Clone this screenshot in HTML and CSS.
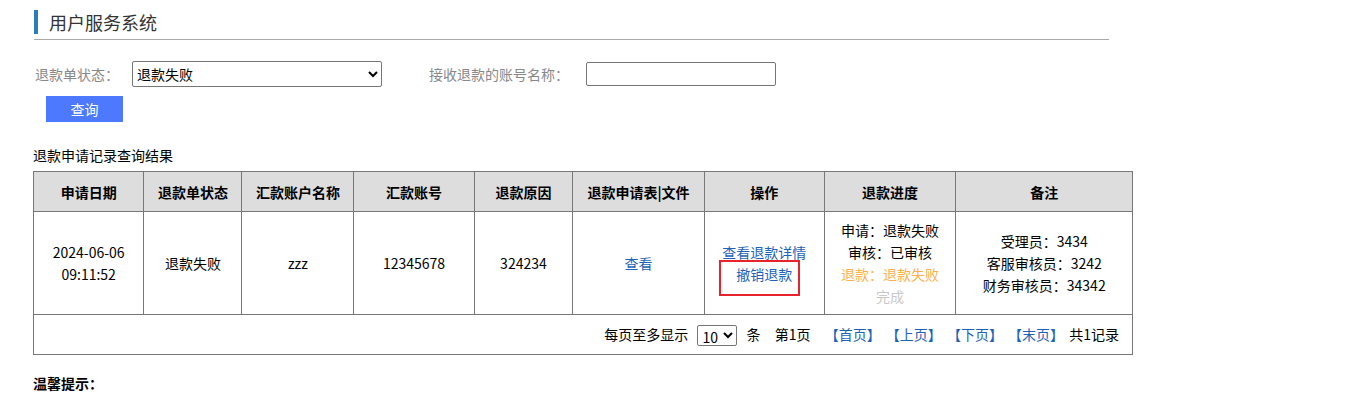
FILE: index.html
```html
<!DOCTYPE html>
<html lang="zh-CN">
  <head>
    <meta charset="UTF-8" />
    <title>用户服务系统</title>
    <link rel="stylesheet" href="styles.css">
  </head>
  <body>
    <div class="page">
      <div class="title-wrap">
        <h2 class="title">用户服务系统</h2>
      </div>

      <div class="search">
        <div class="search-row">
          <label class="label">退款单状态：</label>
          <select class="status-select">
            <option>退款失败</option>
            <option>全部</option>
          </select>
          <label class="label label-account">接收退款的账号名称：</label>
          <input class="account-input" type="text" />
        </div>
        <button class="btn-query">查询</button>
      </div>

      <div class="result-title">退款申请记录查询结果</div>

      <table class="result-table">
        <thead>
          <tr>
            <th class="c-date">申请日期</th>
            <th class="c-status">退款单状态</th>
            <th class="c-name">汇款账户名称</th>
            <th class="c-account">汇款账号</th>
            <th class="c-reason">退款原因</th>
            <th class="c-file">退款申请表|文件</th>
            <th class="c-op">操作</th>
            <th class="c-progress">退款进度</th>
            <th class="c-remark">备注</th>
          </tr>
        </thead>
        <tbody>
          <tr class="data-row">
            <td>2024-06-06<br />09:11:52</td>
            <td>退款失败</td>
            <td>zzz</td>
            <td>12345678</td>
            <td>324234</td>
            <td><a href="#" class="link">查看</a></td>
            <td>
              <a href="#" class="link">查看退款详情</a><br />
              <a href="#" class="link cancel">撤销退款</a>
            </td>
            <td>
              申请：退款失败<br />
              审核：已审核<br />
              <span class="step-fail">退款：退款失败</span><br />
              <span class="step-todo">完成</span>
            </td>
            <td>
              受理员：3434<br />
              客服审核员：3242<br />
              财务审核员：34342
            </td>
          </tr>
          <tr>
            <td colspan="9" class="pager">
              每页至多显示
              <select class="size-select">
                <option>10</option>
                <option>20</option>
              </select>
              <span class="gap">条</span>
              <span class="gap">第1页</span>
              <a href="#" class="link page-link">【首页】</a>
              <a href="#" class="link page-link">【上页】</a>
              <a href="#" class="link page-link">【下页】</a>
              <a href="#" class="link page-link">【末页】</a>
              共1记录
            </td>
          </tr>
        </tbody>
      </table>

      <div class="tips">温馨提示：</div>
    </div>
  </body>
</html>
```

FILE: styles.css
```css
body {
  margin: 0;
  padding: 0;
  font-family: "Noto Sans CJK SC", "Liberation Sans", sans-serif;
  font-size: 14px;
  color: #000;
  background: #fff;
}

.page {
  padding-left: 33px;
  width: 1100px;
}

.title-wrap {
  margin-left: 1px;
  width: 1075px;
  padding-top: 10px;
  padding-bottom: 5px;
  border-bottom: 1px solid #a9a9a9;
}

.title {
  margin: 0;
  padding-left: 11px;
  border-left: 4px solid #2b7bbd;
  font-size: 18px;
  font-weight: normal;
  line-height: 24px;
  color: #333;
}

.search {
  padding-top: 21px;
}

.search-row {
  display: flex;
  align-items: center;
  height: 26px;
}

.label {
  margin-left: 2px;
  margin-right: 13px;
  color: #888;
  line-height: 20px;
}

.label-account {
  margin-left: 47px;
  margin-right: 17px;
}

.status-select {
  width: 250px;
  height: 26px;
  font-family: inherit;
  font-size: 14px;
  color: #000;
  border: 1px solid #767676;
  border-radius: 2px;
  background: #fff;
}

.account-input {
  width: 184px;
  height: 22px;
  padding: 0 2px;
  border: 1px solid #767676;
  border-radius: 2px;
}

.btn-query {
  display: block;
  margin: 9px 0 0 13px;
  width: 77px;
  height: 26px;
  border: none;
  background-color: #4d79ff;
  color: #fff;
  font-family: inherit;
  font-size: 14px;
  line-height: 26px;
  padding: 0;
  cursor: pointer;
}

.result-title {
  margin-top: 22px;
  line-height: 22px;
  font-size: 14px;
}

.result-table {
  margin-top: 5px;
  width: 1100px;
  border-collapse: collapse;
  font-size: 14px;
}

.result-table th,
.result-table td {
  border: 1px solid #777;
  text-align: center;
  padding: 0;
  line-height: 22px;
}

.result-table th {
  height: 39px;
  background-color: #dddddd;
  font-weight: bold;
}

.c-date { width: 110px; }
.c-status { width: 98px; }
.c-name { width: 112px; }
.c-account { width: 120px; }
.c-reason { width: 98px; }
.c-file { width: 132px; }
.c-op { width: 120px; }
.c-progress { width: 132px; }
.c-remark { width: 177px; }

.data-row td {
  height: 102px;
}

.link {
  color: #1e62b8;
  text-decoration: none;
}

/* 标注框 */
.cancel {
  position: relative;
  display: inline-block;
}

.cancel::after {
  content: "";
  position: absolute;
  left: -17px;
  right: -8px;
  top: -3px;
  bottom: -11px;
  border: 2px solid #e8232b;
}

.step-fail {
  color: #f9b14f;
}

.step-todo {
  color: #c8c8c8;
}

.result-table td.pager {
  height: 39px;
  text-align: right;
  padding-right: 13px;
}

.size-select {
  width: 40px;
  height: 21px;
  margin: 0 6px 0 6px;
  font-family: inherit;
  font-size: 14px;
  border: 1px solid #767676;
  border-radius: 2px;
  background: #fff;
  vertical-align: middle;
}

.gap {
  margin-right: 11px;
}

.page-link {
  margin-right: 2px;
}

.tips {
  margin-top: 17px;
  font-weight: bold;
  line-height: 22px;
}
```
